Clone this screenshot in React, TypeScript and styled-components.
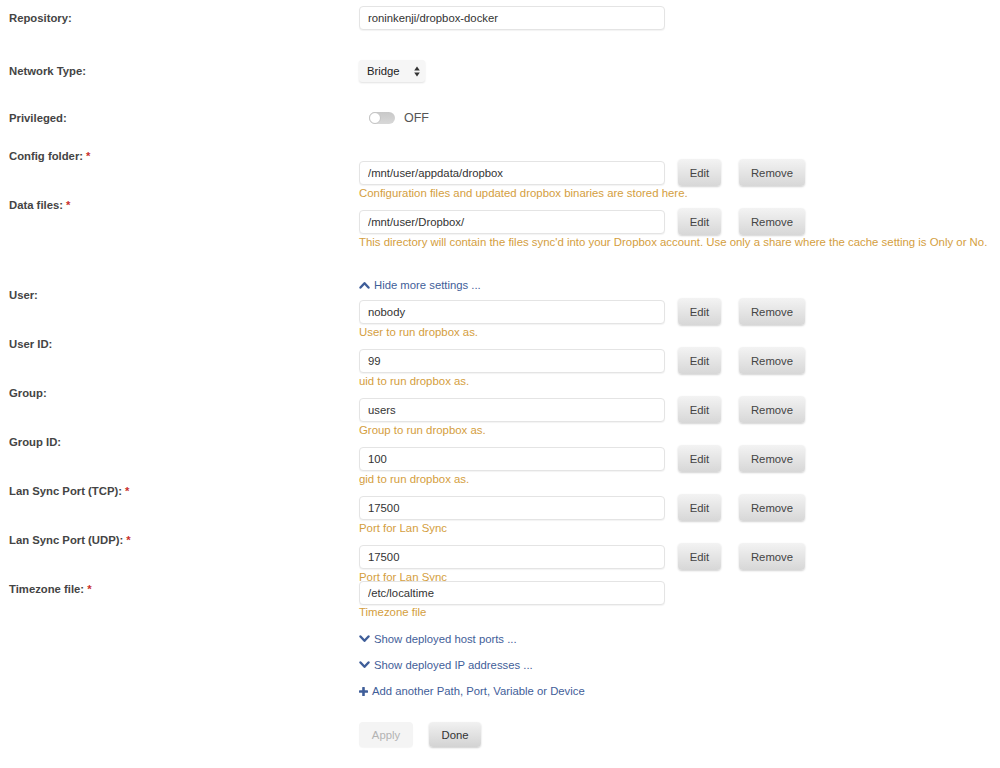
import React from 'react';
import styled, { createGlobalStyle } from 'styled-components';

const Global = createGlobalStyle`
  html, body { margin: 0; padding: 0; background: #ffffff; }
  body {
    font-family: "Liberation Sans", Arial, Helvetica, sans-serif;
    font-size: 11.3px;
    color: #444;
  }
`;

const Form = styled.div`
  width: 1000px;
  box-sizing: border-box;
  padding: 0 0 20px 9px;
`;

const SimpleRow = styled.div<{ $h: number }>`
  display: grid;
  grid-template-columns: 350px 1fr;
  align-items: center;
  height: ${(p) => p.$h}px;
`;

const Label = styled.div`
  font-weight: bold;
  color: #444;
  line-height: 20px;
  white-space: nowrap;
`;

const Req = styled.span`
  color: #c9302c;
  margin-left: 3px;
`;

const TextInput = styled.input`
  box-sizing: border-box;
  width: 306px;
  height: 24px;
  padding: 0 8px;
  font: inherit;
  color: #333;
  background: #fff;
  border: 1px solid #e4e4e4;
  border-radius: 4px;
  box-shadow: 0 1px 1px rgba(0, 0, 0, 0.05);
  outline: none;
`;

const Select = styled.div`
  box-sizing: border-box;
  width: 66px;
  height: 22px;
  display: flex;
  align-items: center;
  justify-content: space-between;
  padding: 0 5px 0 8px;
  background: #f6f6f6;
  border-radius: 3px;
  box-shadow: 0 1px 2px rgba(0, 0, 0, 0.12);
  color: #222;
`;

const SwitchWrap = styled.div`
  display: flex;
  align-items: center;
  gap: 9px;
  padding-left: 10px;
`;

const Track = styled.div`
  position: relative;
  width: 26px;
  height: 12px;
  border-radius: 6px;
  background: linear-gradient(#c8c8c8, #d8d8d8);
`;

const Knob = styled.div`
  position: absolute;
  left: 0;
  top: 0;
  box-sizing: border-box;
  width: 12px;
  height: 12px;
  border-radius: 50%;
  background: #fff;
  border: 1px solid #c4c4c4;
`;

const SwitchText = styled.span`
  font-size: 12.5px;
  color: #555;
`;

const FieldRow = styled.div<{ $first?: boolean; $compact?: boolean }>`
  display: grid;
  grid-template-columns: 350px 1fr;
  align-items: start;
  margin-top: ${(p) => (p.$first ? 16 : 0)}px;
  ${(p) => (p.$compact ? 'position: relative;' : '')}
`;

const Content = styled.div<{ $compact?: boolean }>`
  padding-top: ${(p) => (p.$compact ? 2 : 13)}px;
`;

const Line = styled.div`
  display: flex;
  align-items: center;
`;

const Button = styled.button<{ $w: number; $ml: number }>`
  box-sizing: border-box;
  width: ${(p) => p.$w}px;
  height: 27px;
  margin-left: ${(p) => p.$ml}px;
  border: none;
  border-radius: 4px;
  font: inherit;
  color: #444;
  background: linear-gradient(#f3f3f3, #d7d7d7);
  box-shadow: 0 1px 2px rgba(0, 0, 0, 0.18);
  padding: 0;
`;

const Help = styled.div`
  color: #d49e40;
  font-size: 11.4px;
  line-height: 14px;
  margin-bottom: -5px;
  white-space: nowrap;
`;

const ToggleRow = styled.div<{ $mt: number; $mb: number }>`
  display: grid;
  grid-template-columns: 350px 1fr;
  margin-top: ${(p) => p.$mt}px;
  margin-bottom: ${(p) => p.$mb}px;
`;

const LinkList = styled.div`
  margin-top: 12px;
  display: grid;
  grid-template-columns: 350px 1fr;
`;

const Links = styled.div`
  display: flex;
  flex-direction: column;
`;

const Link = styled.a<{ $lh: number }>`
  display: flex;
  align-items: center;
  gap: 4px;
  line-height: ${(p) => p.$lh}px;
  color: #3f5e99;
  text-decoration: none;
  cursor: pointer;
`;

const ButtonBar = styled.div`
  margin-top: 18px;
  display: grid;
  grid-template-columns: 350px 1fr;
`;

const Actions = styled.div`
  display: flex;
  gap: 16px;
`;

const ActionButton = styled.button<{ $w: number; $disabled?: boolean }>`
  box-sizing: border-box;
  width: ${(p) => p.$w}px;
  height: 25px;
  border: none;
  border-radius: 4px;
  font: inherit;
  padding: 0;
  color: ${(p) => (p.$disabled ? '#b3b3b3' : '#333')};
  background: ${(p) => (p.$disabled ? '#f4f4f4' : 'linear-gradient(#f1f1f1, #d3d3d3)')};
  box-shadow: ${(p) => (p.$disabled ? '0 1px 1px rgba(0,0,0,0.04)' : '0 1px 2px rgba(0,0,0,0.2)')};
`;

const ChevronUp = () => (
  <svg width="11" height="8" viewBox="0 0 11 8">
    <polyline points="1.5,6.5 5.5,2.2 9.5,6.5" fill="none" stroke="#3f5e99" strokeWidth="2.4" strokeLinecap="round" strokeLinejoin="round" />
  </svg>
);

const ChevronDown = () => (
  <svg width="11" height="8" viewBox="0 0 11 8">
    <polyline points="1.5,1.5 5.5,5.8 9.5,1.5" fill="none" stroke="#3f5e99" strokeWidth="2.4" strokeLinecap="round" strokeLinejoin="round" />
  </svg>
);

const Plus = () => (
  <svg width="9" height="9" viewBox="0 0 9 9">
    <rect x="3.2" y="0" width="2.6" height="9" rx="0.6" fill="#3f5e99" />
    <rect x="0" y="3.2" width="9" height="2.6" rx="0.6" fill="#3f5e99" />
  </svg>
);

const UpDown = () => (
  <svg width="6" height="11" viewBox="0 0 6 11">
    <polygon points="3,0.5 5.8,4.5 0.2,4.5" fill="#333" />
    <polygon points="3,10.5 5.8,6.5 0.2,6.5" fill="#333" />
  </svg>
);

type Field = {
  label: string;
  req?: boolean;
  value: string;
  help: string;
  compact?: boolean;
};

const mainFields: Field[] = [
  { label: 'Config folder:', req: true, value: '/mnt/user/appdata/dropbox', help: 'Configuration files and updated dropbox binaries are stored here.' },
  { label: 'Data files:', req: true, value: '/mnt/user/Dropbox/', help: "This directory will contain the files sync'd into your Dropbox account. Use only a share where the cache setting is Only or No." },
];

const moreFields: Field[] = [
  { label: 'User:', value: 'nobody', help: 'User to run dropbox as.' },
  { label: 'User ID:', value: '99', help: 'uid to run dropbox as.' },
  { label: 'Group:', value: 'users', help: 'Group to run dropbox as.' },
  { label: 'Group ID:', value: '100', help: 'gid to run dropbox as.' },
  { label: 'Lan Sync Port (TCP):', req: true, value: '17500', help: 'Port for Lan Sync' },
  { label: 'Lan Sync Port (UDP):', req: true, value: '17500', help: 'Port for Lan Sync' },
  { label: 'Timezone file:', req: true, value: '/etc/localtime', help: 'Timezone file', compact: true },
];

const FieldBlock = ({ f, first }: { f: Field; first?: boolean }) => (
  <FieldRow $first={first} $compact={f.compact}>
    <Label>
      {f.label}
      {f.req && <Req>*</Req>}
    </Label>
    <Content $compact={f.compact}>
      <Line>
        <TextInput defaultValue={f.value} readOnly />
        {!f.compact && (
          <>
            <Button $w={43} $ml={13}>Edit</Button>
            <Button $w={66} $ml={18}>Remove</Button>
          </>
        )}
      </Line>
      <Help>{f.help}</Help>
    </Content>
  </FieldRow>
);

export default function App() {
  return (
    <>
      <Global />
      <Form>
        <SimpleRow $h={36}>
          <Label>Repository:</Label>
          <div>
            <TextInput defaultValue="roninkenji/dropbox-docker" readOnly />
          </div>
        </SimpleRow>
        <SimpleRow $h={70}>
          <Label>Network Type:</Label>
          <div>
            <Select>
              <span>Bridge</span>
              <UpDown />
            </Select>
          </div>
        </SimpleRow>
        <SimpleRow $h={24}>
          <Label>Privileged:</Label>
          <SwitchWrap>
            <Track>
              <Knob />
            </Track>
            <SwitchText>OFF</SwitchText>
          </SwitchWrap>
        </SimpleRow>

        {mainFields.map((f, i) => (
          <FieldBlock key={f.label} f={f} first={i === 0} />
        ))}

        <ToggleRow $mt={31} $mb={-10}>
          <div />
          <Link $lh={20}>
            <ChevronUp />
            Hide more settings ...
          </Link>
        </ToggleRow>

        {moreFields.map((f) => (
          <FieldBlock key={f.label} f={f} />
        ))}

        <LinkList>
          <div />
          <Links>
            <Link $lh={26}>
              <ChevronDown />
              Show deployed host ports ...
            </Link>
            <Link $lh={26}>
              <ChevronDown />
              Show deployed IP addresses ...
            </Link>
            <Link $lh={26}>
              <Plus />
              Add another Path, Port, Variable or Device
            </Link>
          </Links>
        </LinkList>

        <ButtonBar>
          <div />
          <Actions>
            <ActionButton $w={54} $disabled>Apply</ActionButton>
            <ActionButton $w={52}>Done</ActionButton>
          </Actions>
        </ButtonBar>
      </Form>
    </>
  );
}
